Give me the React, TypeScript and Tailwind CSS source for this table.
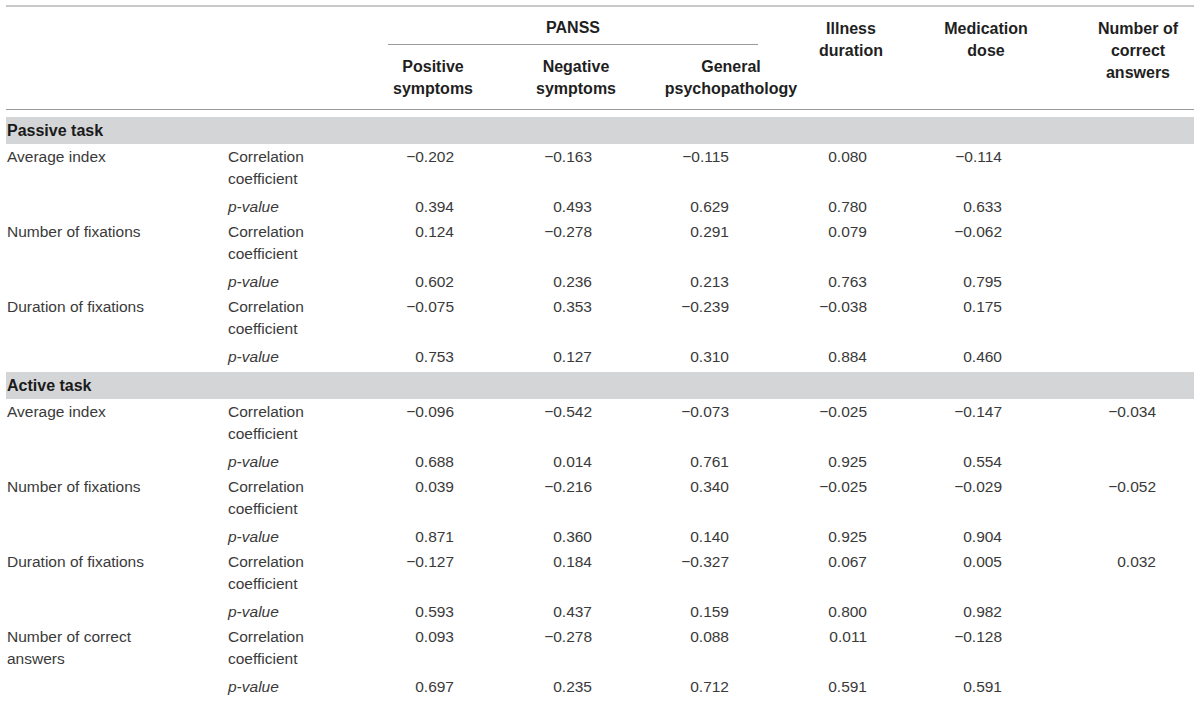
import React from "react"

type Block = {
  label: React.ReactNode
  r: string[]
  p: string[]
}

const cols = "grid grid-cols-[216px_166px_130px_132px_162px_120px_156px_106px]"

// right padding of the number cells, one per data column
const valPad = ["pr-[64px]", "pr-[58px]", "pr-[83px]", "pr-[65px]", "pr-[86px]", "pr-[38px]"]

const passive: Block[] = [
  {
    label: "Average index",
    r: ["−0.202", "−0.163", "−0.115", "0.080", "−0.114", ""],
    p: ["0.394", "0.493", "0.629", "0.780", "0.633", ""],
  },
  {
    label: "Number of fixations",
    r: ["0.124", "−0.278", "0.291", "0.079", "−0.062", ""],
    p: ["0.602", "0.236", "0.213", "0.763", "0.795", ""],
  },
  {
    label: "Duration of fixations",
    r: ["−0.075", "0.353", "−0.239", "−0.038", "0.175", ""],
    p: ["0.753", "0.127", "0.310", "0.884", "0.460", ""],
  },
]

const active: Block[] = [
  {
    label: "Average index",
    r: ["−0.096", "−0.542", "−0.073", "−0.025", "−0.147", "−0.034"],
    p: ["0.688", "0.014", "0.761", "0.925", "0.554", ""],
  },
  {
    label: "Number of fixations",
    r: ["0.039", "−0.216", "0.340", "−0.025", "−0.029", "−0.052"],
    p: ["0.871", "0.360", "0.140", "0.925", "0.904", ""],
  },
  {
    label: "Duration of fixations",
    r: ["−0.127", "0.184", "−0.327", "0.067", "0.005", "0.032"],
    p: ["0.593", "0.437", "0.159", "0.800", "0.982", ""],
  },
  {
    label: (
      <>
        Number of correct
        <br />
        answers
      </>
    ),
    r: ["0.093", "−0.278", "0.088", "0.011", "−0.128", ""],
    p: ["0.697", "0.235", "0.712", "0.591", "0.591", ""],
  },
]

function SectionBand({ title, className = "" }: { title: string; className?: string }) {
  return (
    <div
      className={
        "h-[27px] bg-[#d4d5d7] pl-[1px] text-[16px] font-bold leading-[27px] text-[#1a1a1a] " + className
      }
    >
      {title}
    </div>
  )
}

function BlockRows({ block }: { block: Block }) {
  return (
    <div className={cols}>
      <div className="row-span-2 pl-[1px] pt-[2px]">{block.label}</div>
      <div className="pl-[6px] pt-[2px] pb-[4px]">
        Correlation
        <br />
        coefficient
      </div>
      {block.r.map((v, i) => (
        <div key={"r" + i} className={"pt-[2px] text-right " + valPad[i]}>
          {v}
        </div>
      ))}
      <div className="pl-[6px] pt-[2px] pb-[1px] italic">p-value</div>
      {block.p.map((v, i) => (
        <div key={"p" + i} className={"pt-[2px] text-right " + valPad[i]}>
          {v}
        </div>
      ))}
    </div>
  )
}

export default function App() {
  return (
    <div className="h-[701px] w-[1200px] overflow-hidden bg-white font-['Liberation_Sans',Arial,sans-serif] text-[15.5px] leading-[22px] text-[#3a3a3a]">
      <div className="ml-[6px] mt-[5px] w-[1188px] border-t-2 border-[#c9c9c9]">
        {/* header */}
        <div className={cols + " border-b border-[#9a9a9a] text-[16px] font-bold text-[#1f1f1f]"}>
          <div className="row-span-2" />
          <div className="row-span-2" />
          <div className="col-span-3 pt-[10px]">
            <div className="mr-[54px] border-b border-[#9a9a9a] pb-[5px] text-center">PANSS</div>
          </div>
          <div className="row-span-2 pt-[11px] pr-[42px] text-center">
            Illness
            <br />
            duration
          </div>
          <div className="row-span-2 pt-[11px] pr-[48px] text-center">
            Medication
            <br />
            dose
          </div>
          <div className="row-span-2 pt-[11px] pr-[6px] text-center">
            Number of
            <br />
            correct
            <br />
            answers
          </div>
          <div className="pt-[11px] pb-[9px] pr-[40px] text-center">
            Positive
            <br />
            symptoms
          </div>
          <div className="pt-[11px] pb-[9px] pr-[16px] text-center">
            Negative
            <br />
            symptoms
          </div>
          <div className="pt-[11px] pb-[9px] text-center">
            General
            <br />
            psychopathology
          </div>
        </div>

        <div className="mt-[7px]">
          <SectionBand title="Passive task" />
          {passive.map((b, i) => (
            <BlockRows key={i} block={b} />
          ))}
          <SectionBand title="Active task" className="mt-[3px]" />
          {active.map((b, i) => (
            <BlockRows key={i} block={b} />
          ))}
        </div>
      </div>
    </div>
  )
}
